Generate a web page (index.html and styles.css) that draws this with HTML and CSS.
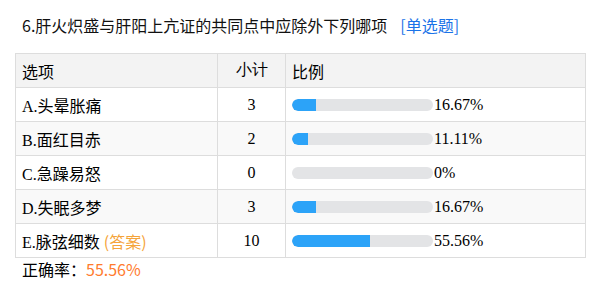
FILE: index.html
```html
<!DOCTYPE html>
<html>
<head>
<meta charset="utf-8">
<link rel="stylesheet" href="styles.css">
</head>
<body>
<div class="wrap">
  <div class="title">6.肝火炽盛与肝阳上亢证的共同点中应除外下列哪项<span class="qtype">[单选题]</span></div>
  <table class="stats">
    <colgroup><col class="c1"><col class="c2"><col class="c3"></colgroup>
    <thead>
      <tr><th>选项</th><th class="num">小计</th><th>比例</th></tr>
    </thead>
    <tbody>
      <tr><td><span class="opt">A.</span>头晕胀痛</td><td class="num">3</td><td><div class="pct"><div class="bar"><div class="fill" style="width:16.67%"></div></div><span class="val">16.67%</span></div></td></tr>
      <tr class="alt"><td><span class="opt">B.</span>面红目赤</td><td class="num">2</td><td><div class="pct"><div class="bar"><div class="fill" style="width:11.11%"></div></div><span class="val">11.11%</span></div></td></tr>
      <tr><td><span class="opt">C.</span>急躁易怒</td><td class="num">0</td><td><div class="pct"><div class="bar"><div class="fill" style="width:0%"></div></div><span class="val">0%</span></div></td></tr>
      <tr class="alt"><td><span class="opt">D.</span>失眠多梦</td><td class="num">3</td><td><div class="pct"><div class="bar"><div class="fill" style="width:16.67%"></div></div><span class="val">16.67%</span></div></td></tr>
      <tr><td><span class="opt">E.</span>脉弦细数 <span class="answer">(答案)</span></td><td class="num">10</td><td><div class="pct"><div class="bar"><div class="fill" style="width:55.56%"></div></div><span class="val">55.56%</span></div></td></tr>
    </tbody>
  </table>
  <div class="rate">正确率：<span class="rate-val">55.56%</span></div>
</div>
</body>
</html>
```
FILE: styles.css
```css
html, body {
  margin: 0;
  padding: 0;
  background: #fff;
}
body {
  font-family: "Liberation Serif", "Noto Sans CJK SC", serif;
  font-size: 16px;
  color: #000;
}
.wrap {
  padding: 15px 0 0 15px;
}
.title {
  font-family: "Noto Sans CJK SC", sans-serif;
  font-size: 16px;
  line-height: 20px;
  padding-left: 7px;
  color: #111;
}
.qtype {
  color: #1a73e8;
  margin-left: 13px;
}
.stats {
  margin-top: 18px;
  border-collapse: collapse;
  width: 570px;
  table-layout: fixed;
}
.c1 { width: 202px; }
.c2 { width: 68px; }
.c3 { width: 300px; }
.stats th, .stats td {
  border: 1px solid #dddddd;
  height: 33px;
  padding: 0 0 0 6px;
  text-align: left;
  font-weight: normal;
  white-space: nowrap;
}
.stats th {
  font-family: "Noto Sans CJK SC", sans-serif;
  background: #f3f3f3;
}
.stats .num {
  text-align: center;
  padding: 0;
  font-family: "Liberation Serif", serif;
}
.stats tr.alt td {
  background: #f9f9f9;
}
.opt {
  font-family: "Liberation Serif", serif;
}
.pct {
  display: flex;
  align-items: center;
}
.bar {
  width: 141px;
  height: 12px;
  border-radius: 6px;
  background: #e3e4e6;
  overflow: hidden;
  flex: none;
}
.fill {
  height: 100%;
  background: #2ca3f8;
  border-radius: 6px 0 0 6px;
}
.val {
  margin-left: 1px;
  font-family: "Liberation Serif", serif;
}
.answer {
  font-family: "Noto Sans CJK SC", sans-serif;
  color: #f5a43a;
}
.rate {
  font-family: "Noto Sans CJK SC", sans-serif;
  padding-left: 7px;
  line-height: 22px;
  margin-top: 0;
}
.rate-val {
  color: #ff7b2e;
}
```
